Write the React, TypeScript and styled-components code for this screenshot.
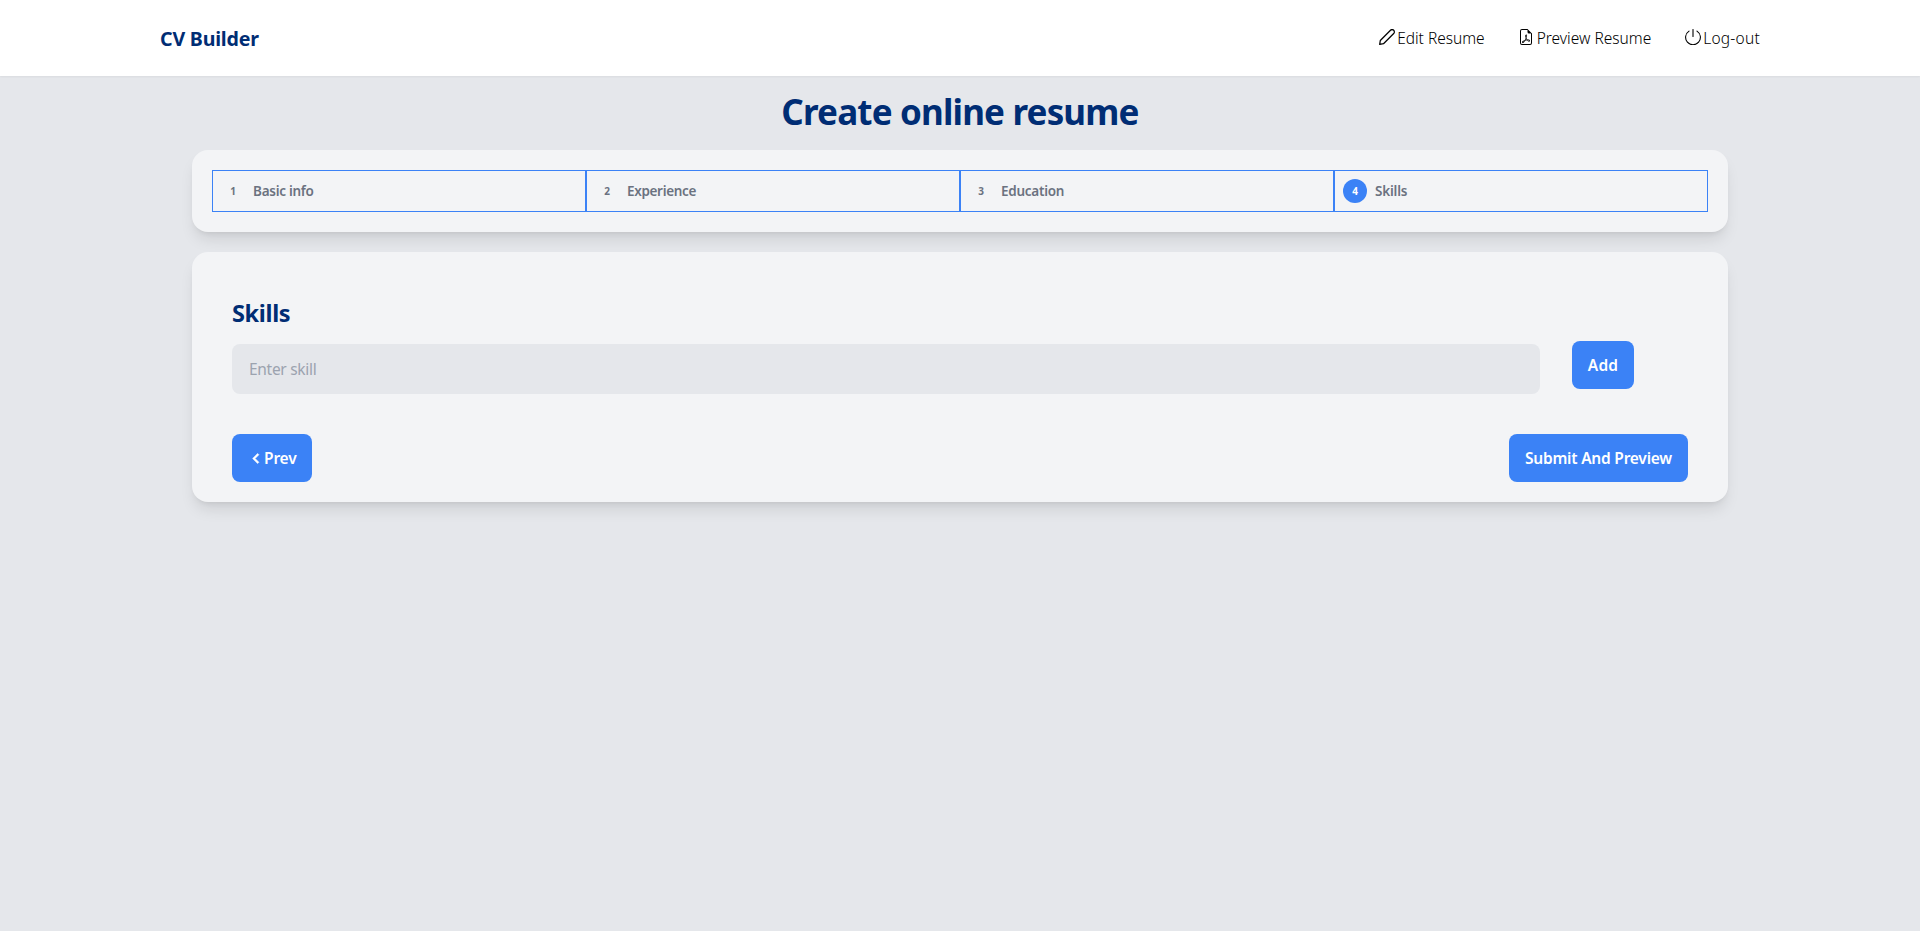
import React from "react";
import styled, { createGlobalStyle, css } from "styled-components";
import { BsFileEarmarkPdf } from "react-icons/bs";
import { BiChevronLeft } from "react-icons/bi";

const GlobalStyle = createGlobalStyle`
  *, *::before, *::after {
    box-sizing: border-box;
  }
  body {
    margin: 0;
    min-height: 100vh;
    background: #e5e7eb;
    font-family: "Segoe UI", "Noto Sans", "Open Sans", sans-serif;
    color: #000;
  }
`;

const Header = styled.header`
  height: 76px;
  background: #fff;
  box-shadow: 0 1px 2px rgba(0, 0, 0, 0.05);
`;

const HeaderInner = styled.div`
  display: flex;
  align-items: center;
  justify-content: space-between;
  width: 1600px;
  height: 100%;
  margin: 0 auto;
`;

const Brand = styled.a`
  color: #002d74;
  font-size: 19.6px;
  font-weight: 700;
  line-height: 28px;
  letter-spacing: -0.2px;
  padding-top: 1px;
`;

const Nav = styled.nav`
  display: flex;
  gap: 33.5px;
`;

const NavLink = styled.a<{ $tracking: number }>`
  display: flex;
  align-items: center;
  gap: 2.5px;
  font-size: 15.5px;
  font-weight: 300;
  line-height: 24px;
  letter-spacing: ${(p) => p.$tracking}px;

  svg {
    width: 16px;
    height: 16px;
    margin-bottom: 2px;
  }
`;

const Main = styled.main`
  display: flex;
  flex-direction: column;
  width: 1536px;
  margin: 0 auto;
  padding-top: 16px;
`;

const PageTitle = styled.h1`
  margin: 0 0 18px;
  color: #002d74;
  font-size: 35px;
  font-weight: 700;
  line-height: 40px;
  letter-spacing: -0.83px;
  text-align: center;
`;

const Card = styled.section`
  background: #f3f4f6;
  border-radius: 16px;
  box-shadow: 0 10px 15px -3px rgba(0, 0, 0, 0.1),
    0 4px 6px -4px rgba(0, 0, 0, 0.1);
`;

const StepsCard = styled(Card)`
  padding: 20px;
  margin-bottom: 20px;
`;

const Steps = styled.ol`
  display: grid;
  grid-template-columns: repeat(4, 1fr);
  margin: 0;
  padding: 0;
  list-style: none;
`;

const Step = styled.li`
  display: flex;
  align-items: center;
  gap: 8px;
  height: 42px;
  padding: 8px;
  border: 1px solid #3b82f6;
  color: #6b7280;
`;

const StepNumber = styled.span<{ $active: boolean }>`
  width: 24px;
  height: 24px;
  border-radius: 50%;
  font-size: 10px;
  font-weight: 700;
  line-height: 24px;
  text-align: center;
  ${(p) =>
    p.$active &&
    css`
      background: #3b82f6;
      color: #fff;
    `}
`;

const StepLabel = styled.span<{ $tracking: number }>`
  font-size: 13.5px;
  font-weight: 600;
  line-height: 24px;
  letter-spacing: ${(p) => p.$tracking}px;
`;

const FormCard = styled(Card)`
  padding: 45px 40px 20px;
`;

const SectionTitle = styled.h2`
  margin: 0 0 12px;
  color: #002d74;
  font-size: 23.5px;
  font-weight: 700;
  line-height: 32px;
  letter-spacing: -0.35px;
`;

const SkillRow = styled.div`
  display: flex;
  align-items: flex-start;
  gap: 32px;
`;

const SkillInput = styled.input`
  width: 1308px;
  height: 50px;
  margin-top: 3px;
  padding: 0 17px;
  border: 0;
  border-radius: 8px;
  background: #e5e7eb;
  font-family: inherit;
  font-size: 15.5px;
  letter-spacing: -0.3px;

  &::placeholder {
    color: #9ca3af;
    opacity: 1;
  }
`;

const Button = styled.button<{ $width: number; $tracking?: number }>`
  display: flex;
  align-items: center;
  justify-content: center;
  width: ${(p) => p.$width}px;
  height: 48px;
  padding: 0;
  border: 0;
  border-radius: 8px;
  background: #3b82f6;
  color: #fff;
  font-family: inherit;
  font-size: 15.5px;
  font-weight: 600;
  line-height: 24px;
  letter-spacing: ${(p) => p.$tracking ?? 0}px;
  white-space: nowrap;

  svg {
    width: 21px;
    height: 21px;
    margin: 0 -3px 0 -1.5px;
    stroke: currentColor;
    stroke-width: 0.7;
  }
`;

const Actions = styled.div`
  display: flex;
  justify-content: space-between;
  margin-top: 40px;
`;

const PencilIcon = () => (
  <svg viewBox="0 0 16 16" fill="none" stroke="currentColor" strokeWidth="1.25" strokeLinejoin="round">
    <path d="M.7 15.3 1.3 11.5 11.5 1.3a2.25 2.25 0 0 1 3.2 3.2L4.5 14.7Z" />
  </svg>
);

const PowerIcon = () => (
  <svg viewBox="0 0 16 16" fill="none" stroke="currentColor" strokeWidth="1.1" strokeLinecap="round">
    <path d="M4 2.1a7.4 7.4 0 1 0 8 0M8 .5v7" />
  </svg>
);

const navItems = [
  { label: "Edit Resume", Icon: PencilIcon, tracking: 0 },
  { label: "Preview Resume", Icon: BsFileEarmarkPdf, tracking: 0 },
  { label: "Log-out", Icon: PowerIcon, tracking: 0.25 },
];

const steps = [
  { label: "Basic info", tracking: -0.27 },
  { label: "Experience", tracking: -0.33 },
  { label: "Education", tracking: -0.27 },
  { label: "Skills", tracking: -0.2 },
];

const activeStep = 3;

export default function App() {
  return (
    <>
      <GlobalStyle />
      <Header>
        <HeaderInner>
          <Brand>CV Builder</Brand>
          <Nav>
            {navItems.map(({ label, Icon, tracking }) => (
              <NavLink key={label} $tracking={tracking}>
                <Icon />
                {label}
              </NavLink>
            ))}
          </Nav>
        </HeaderInner>
      </Header>
      <Main>
        <PageTitle>Create online resume</PageTitle>
        <StepsCard>
          <Steps>
            {steps.map((step, i) => (
              <Step key={step.label}>
                <StepNumber $active={i === activeStep}>{i + 1}</StepNumber>
                <StepLabel $tracking={step.tracking}>{step.label}</StepLabel>
              </Step>
            ))}
          </Steps>
        </StepsCard>
        <FormCard>
          <SectionTitle>Skills</SectionTitle>
          <SkillRow>
            <SkillInput placeholder="Enter skill" />
            <Button $width={62} $tracking={0.2}>
              Add
            </Button>
          </SkillRow>
          <Actions>
            <Button $width={80} $tracking={-0.2}>
              <BiChevronLeft />
              Prev
            </Button>
            <Button $width={179} $tracking={-0.22}>
              Submit And Preview
            </Button>
          </Actions>
        </FormCard>
      </Main>
    </>
  );
}
